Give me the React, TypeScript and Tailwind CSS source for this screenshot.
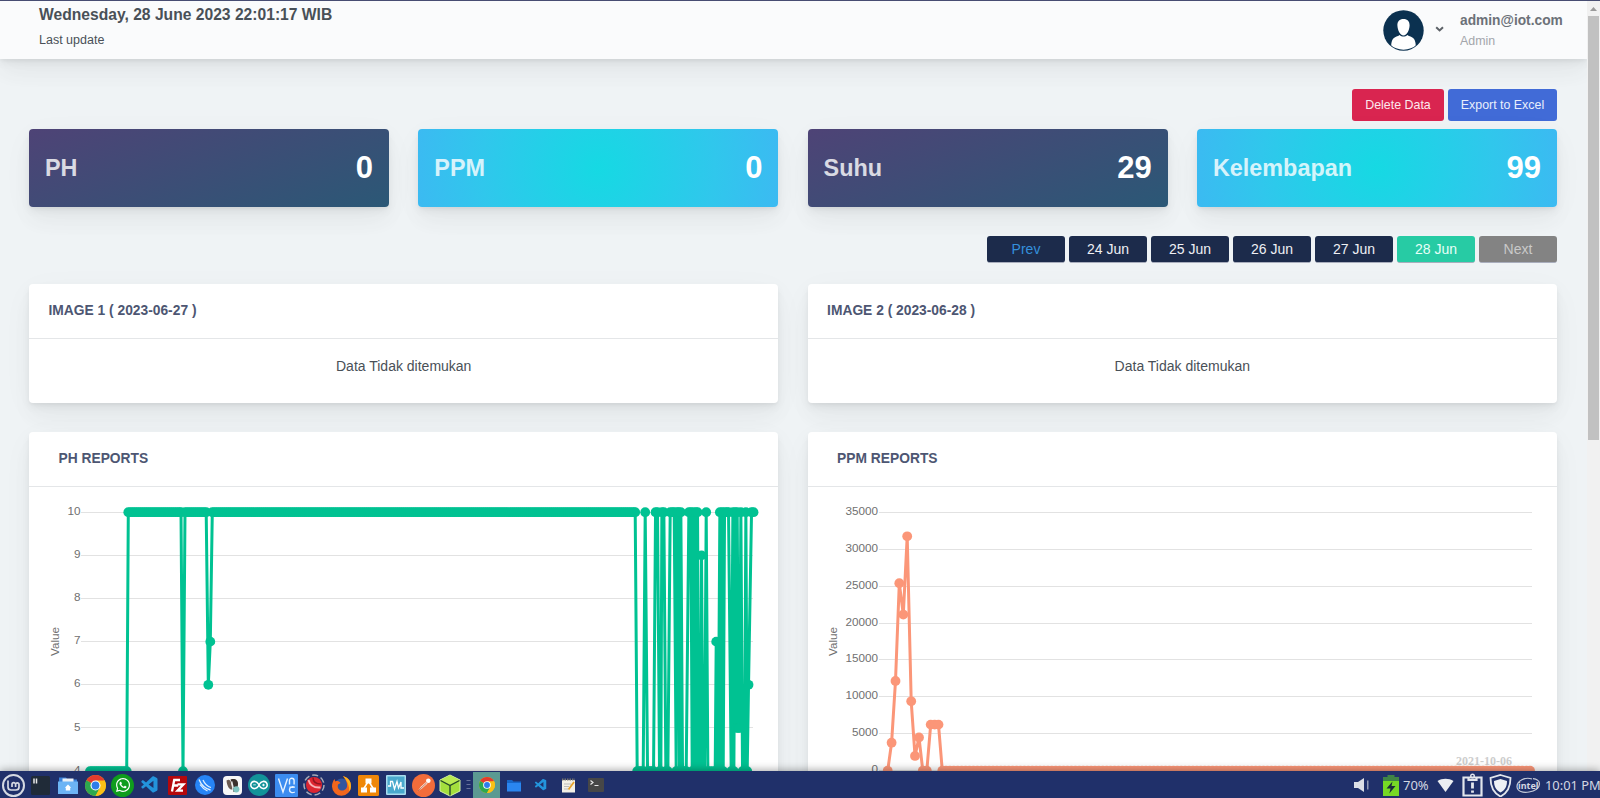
import React from "react";
import { FaWhatsapp } from "react-icons/fa";
import { SiArduino } from "react-icons/si";
import { VscVscode } from "react-icons/vsc";

const SHADOW =
  "shadow-[0_7px_34px_rgba(4,9,20,0.03),0_15px_22px_rgba(4,9,20,0.03),0_4px_8px_rgba(4,9,20,0.05),0_2px_3px_rgba(4,9,20,0.03)]";

const stats = [
  { label: "PH", value: "0", cyan: false },
  { label: "PPM", value: "0", cyan: true },
  { label: "Suhu", value: "29", cyan: false },
  { label: "Kelembapan", value: "99", cyan: true },
];

const days = [
  { label: "Prev", style: "bg-[#1c2b4b] text-[#3490dc]" },
  { label: "24 Jun", style: "bg-[#1c2b4b] text-[#eef0f4]" },
  { label: "25 Jun", style: "bg-[#1c2b4b] text-[#eef0f4]" },
  { label: "26 Jun", style: "bg-[#1c2b4b] text-[#eef0f4]" },
  { label: "27 Jun", style: "bg-[#1c2b4b] text-[#eef0f4]" },
  { label: "28 Jun", style: "bg-[#27cba4] text-[#e8fff8]" },
  { label: "Next", style: "bg-[#838383] text-[#c9c9c9]" },
];

function Header() {
  return (
    <header className={"relative z-10 flex h-[58px] shrink-0 items-start justify-between bg-[#fafbfc] pl-[39px] pr-[24px] " + SHADOW}>
      <div className="flex flex-col text-[#495057]">
        <span className="mt-[4px] text-[15.650px] font-bold leading-[20px]">Wednesday, 28 June 2023 22:01:17 WIB</span>
        <span className="mt-[7px] text-[12.500px] leading-[17px]">Last update</span>
      </div>
      <div className="flex">
        <svg className="mt-[9px] h-[41px] w-[41px]" viewBox="0 0 41 41">
          <defs>
            <clipPath id="avatar"><circle cx="20.5" cy="20.5" r="19.3" /></clipPath>
          </defs>
          <circle cx="20.5" cy="20.5" r="20.2" fill="#0b3150" />
          <g clipPath="url(#avatar)" fill="#fff">
            <path d="M20.500 9c4 0 6.300 2.500 6.100 6.600-.2 4.800-2.700 9.900-6.100 9.900s-5.900-5.100-6.100-9.900C14.200 11.500 16.500 9 20.500 9z" />
            <path d="M8.300 42c-.4-9 0-13.500 4.700-15.300 1.500-.6 2.800-1 3.600-1.700 2.400 2 5.400 2 7.800 0 .8.700 2.100 1.100 3.600 1.700 4.700 1.800 5.100 6.300 4.700 15.300z" />
          </g>
        </svg>
        <svg className="ml-[11px] mt-[24px] h-[8px] w-[9px]" viewBox="0 0 9 8" fill="none" stroke="#5c6167" strokeWidth="2">
          <path d="M1.200 2.200l3.400 3.200L8 2.200" />
        </svg>
        <div className="ml-[16px] flex w-[103px] flex-col">
          <span className="mt-[11px] text-[13.750px] font-bold leading-[18px] text-[#6c7178]">admin@iot.com</span>
          <span className="mt-[3px] text-[12.400px] leading-[16px] text-[#a3a6ab]">Admin</span>
        </div>
      </div>
    </header>
  );
}

function ImageCard({ title }: { title: string }) {
  return (
    <section className={"flex h-[119px] flex-col rounded-[4px] bg-white " + SHADOW}>
      <h2 className="flex h-[55px] items-center border-b border-[#e4e6e8] px-[19.500px] pt-[1px] text-[13.800px] font-bold text-[#4d5672]">{title}</h2>
      <p className="mt-[17px] text-center text-[14px] leading-[20px] text-[#495057]">Data Tidak ditemukan</p>
    </section>
  );
}

function ReportCard({ title, children }: { title: string; children: React.ReactNode }) {
  return (
    <section className={"flex h-[420px] flex-col rounded-[4px] bg-white " + SHADOW}>
      <h2 className="flex h-[55px] shrink-0 items-center border-b border-[#e4e6e8] px-[29.500px] pt-[1px] text-[13.800px] font-bold text-[#4d5672]">{title}</h2>
      {children}
    </section>
  );
}

type Pt = [number, number];

function Series({ points, color }: { points: Pt[]; color: string }) {
  return (
    <g fill={color}>
      <polyline points={points.map((p) => p.join(",")).join(" ")} fill="none" stroke={color} strokeWidth="3" strokeLinejoin="round" />
      {points.map((p, i) => (
        <circle key={i} cx={p[0]} cy={p[1]} r="4.9" />
      ))}
    </g>
  );
}

/* Sensor level (4..10) to vertical position inside the drawing. */
const phY = (v: number) => 25.200 + (10 - v) * 43.150;

function buildPh(): Pt[] {
  const pts: Pt[] = [];
  const put = (x: number, v: number) => pts.push([x - 29, phY(v)]);
  for (let x = 90; x < 126; x += 2.080) put(x, 4);
  put(126.700, 4);
  put(128.300, 10);
  for (let x = 130.500; x < 180; x += 2.040) put(x, 10);
  put(181, 10);
  put(183, 4);
  for (let x = 185; x < 206.600; x += 2.120) put(x, 10);
  put(208.300, 6);
  put(210.300, 7);
  put(212.300, 10);
  for (let x = 214.400; x < 634; x += 2.055) put(x, 10);
  /* Latest readings: offset from x = 600 in thirds of a pixel, then the level. */
  const tail: Pt[] = [
    [105, 10], [111, 4], [117, 4], [123, 4], [129, 4], [135, 10], [142, 4], [148, 4], [154, 4], [160, 4],
    [166, 10], [172, 10], [178, 4], [182, 4], [185, 10], [191, 10], [197, 4], [203, 4], [210, 10], [217, 10],
    [222, 10], [228, 4], [231, 10], [235, 10], [238, 4], [242, 10], [247, 4], [252, 4], [258, 4], [266, 10],
    [272, 10], [276, 4], [279, 10], [284, 4], [287, 10], [290, 4], [292, 10], [296, 4], [301, 4], [304, 9],
    [308, 4], [313, 4], [318, 10], [323, 4], [330, 4], [338, 4], [345, 4], [348, 7], [350, 4], [354, 4],
    [359, 10], [362, 4], [366, 10], [369, 4], [373, 10], [380, 10], [385, 10], [393, 4], [398, 10], [401, 4],
    [405, 10], [408, 5], [411, 10], [415, 5], [418, 5], [422, 10], [427, 4], [433, 4], [437, 10], [441, 4],
    [445, 6], [454, 10], [460, 10],
  ];
  tail.forEach(([x, v]) => put(600.200 + x / 3, v));
  return pts;
}

const phPoints = buildPh();

const ppmY = (v: number) => 25.300 + ((35000 - v) / 5000) * 36.920;

function buildPpm(): Pt[] {
  const head: Pt[] = [
    [887.700, 0], [891.600, 3800], [895.500, 12150], [899.300, 25400], [903.300, 21150], [907.200, 31750],
    [911.200, 9400], [915, 2000], [919, 4500], [922.800, 0], [926.800, 0], [930.700, 6250], [934.700, 6250],
    [938.500, 6250], [942.300, 0],
  ];
  const pts: Pt[] = head.map(([x, v]) => [x - 808, ppmY(v)]);
  for (let x = 946; x < 1534; x += 3.920) pts.push([x - 808, ppmY(0)]);
  return pts;
}

const ppmPoints = buildPpm();

function PhChart() {
  return (
    <svg className="h-[300px] w-[749px] shrink-0" viewBox="0 0 749 300" fontFamily="'Liberation Sans', Arial, sans-serif" fontSize="11.700" fill="#707070">
      {[10, 9, 8, 7, 6, 5, 4].map((v) => (
        <g key={v}>
          <path d={`M52 ${Math.floor(phY(v)) + 0.5}H724`} stroke="#e2e2e2" />
          <text x="51.500" y={Math.round(phY(v) + 2.700)} textAnchor="end">{v}</text>
        </g>
      ))}
      <text transform="translate(29.500 154.500) rotate(-90)" textAnchor="middle">Value</text>
      <Series points={phPoints} color="#00c292" />
    </svg>
  );
}

function PpmChart() {
  return (
    <svg className="h-[300px] w-[749px] shrink-0" viewBox="0 0 749 300" fontFamily="'Liberation Sans', Arial, sans-serif" fontSize="11.700" fill="#707070">
      {[35000, 30000, 25000, 20000, 15000, 10000, 5000, 0].map((v) => (
        <g key={v}>
          <path d={`M71 ${Math.floor(ppmY(v)) + 0.5}H724`} stroke="#e2e2e2" />
          <text x="70" y={Math.round(ppmY(v) + 2.500)} textAnchor="end">{v}</text>
        </g>
      ))}
      <text transform="translate(28.500 154.500) rotate(-90)" textAnchor="middle">Value</text>
      <Series points={ppmPoints} color="#fb9678" />
      <text x="676" y="278" fontFamily="'Liberation Serif', serif" fontSize="12" fontWeight="bold" textAnchor="middle" fill="#cdcdcd">2021-10-06</text>
    </svg>
  );
}

function Chrome({ size }: { size: string }) {
  return (
    <svg className={size} viewBox="0 0 20 20">
      <circle cx="10" cy="10" r="10" fill="#fbc116" />
      <path d="M10 10L1.340 5A10 10 0 0 1 18.660 5z" fill="#e33b2e" />
      <path d="M10 10L1.340 5A10 10 0 0 0 10 20l4.300-7.500z" fill="#2da94f" />
      <path d="M10 5.300h8.800A10 10 0 0 1 10 20l4-7.600z" fill="#fbc116" />
      <circle cx="10" cy="10" r="4.800" fill="#fff" />
      <circle cx="10" cy="10" r="3.700" fill="#2f7de9" />
    </svg>
  );
}

function Slot({ children, active = false }: { children: React.ReactNode; active?: boolean }) {
  return (
    <div className={"flex h-[27px] w-[27.300px] shrink-0 items-center justify-center " + (active ? "bg-[#5b9a92]" : "")}>{children}</div>
  );
}

function Launchers() {
  return (
    <div className="flex items-center pt-[1px]">
      <Slot>
        <span className="flex h-[23px] w-[23px] items-center justify-center rounded-full border-2 border-[#d5d9e2] text-[#d5d9e2]">
          <svg className="h-[15px] w-[15px] shrink-0" viewBox="0 0 15 15" fill="none" stroke="currentColor" strokeWidth="1.700">
            <path d="M2 2.500v6.500a3 3 0 0 0 3 3h5a3 3 0 0 0 3-3V6.500a1.700 1.700 0 0 0-3.400 0V9M9.600 6.500a1.800 1.800 0 0 0-3.600 0V9" />
          </svg>
        </span>
      </Slot>
      <Slot>
        <svg className="h-[19px] w-[19px]" viewBox="0 0 19 19">
          <rect width="19" height="19" rx="1.500" fill="#202b38" />
          <path d="M3 2.500v5M5.500 2.500v5" stroke="#e8e8e8" strokeWidth="1.500" />
        </svg>
      </Slot>
      <Slot>
        <svg className="h-[20px] w-[20px]" viewBox="0 0 20 20">
          <path d="M1 2.500h7l1.500 2H19V9H1z" fill="#3b82d9" />
          <path d="M4.500 3.500h11V8h-11z" fill="#e8eef5" />
          <path d="M0 6.500h20V19H0z" fill="#6cb4f5" />
          <path d="M10 9.500l3.200 3.200h-1V15.500H7.800v-2.800h-1z" fill="#fff" />
        </svg>
      </Slot>
      <Slot><Chrome size="h-[21px] w-[21px]" /></Slot>
      <Slot>
        <span className="flex h-[23px] w-[23px] items-center justify-center rounded-full bg-[#0f9d1d] text-[16px] text-white"><FaWhatsapp /></span>
      </Slot>
      <Slot><VscVscode className="h-[20px] w-[20px] text-[#2394dc]" /></Slot>
      <Slot>
        <svg className="h-[19px] w-[19px]" viewBox="0 0 19 19">
          <rect width="19" height="19" rx="1" fill="#b5080c" />
          <path d="M4 15.500L6.200 4H12M5.200 9.500h5M9.500 8.300h6l-6 6.400h5.500" fill="none" stroke="#fff" strokeWidth="2.300" />
        </svg>
      </Slot>
      <Slot>
        <svg className="h-[20px] w-[20px]" viewBox="0 0 20 20">
          <circle cx="10" cy="10" r="10" fill="#2684f6" />
          <path d="M4 4.500c2 5 6 9 11.500 10.500M8 5c1.500 3.500 4.500 6.500 8 7.500M5 9.500c2 3 4.500 5 7.500 6.500" stroke="#dff0ff" strokeWidth="1.300" fill="none" />
        </svg>
      </Slot>
      <Slot>
        <svg className="h-[19px] w-[19px]" viewBox="0 0 19 19">
          <rect width="19" height="19" rx="4" fill="#f7f7f7" />
          <path d="M3.500 4.500c2.500-1.500 3.800-.5 4.500 2l1.500 7c-3 .5-5.500-3-6-9z" fill="#6b5a50" />
          <path d="M7.500 3.500c4.500-1.500 8 .5 7.500 5-.5 4-2 7.500-4.500 7.500-.5-4-1-8-3-12.500z" fill="#3a302c" />
          <path d="M8.700 5.500l1.600 7" stroke="#eee" strokeWidth="1.300" />
          <circle cx="13.300" cy="13.300" r="3.100" fill="#7fc4c1" />
        </svg>
      </Slot>
      <Slot>
        <span className="flex h-[22px] w-[22px] items-center justify-center rounded-full bg-[#129399]"><SiArduino className="h-[18px] w-[18px] text-white" /></span>
      </Slot>
      <Slot>
        <svg className="h-[23px] w-[23px]" viewBox="0 0 23 23">
          <rect width="23" height="23" rx="1" fill="#3c8cf0" />
          <path d="M3.500 4.500L8 18l4.500-13.500M14.500 10.500V6.500a2.300 2.300 0 0 1 4.600 0v4M19.800 13.300c-2.500-1.200-5.300-.3-5.300 2.400s2.800 3.600 5.300 2.300M14.500 13.300h4" fill="none" stroke="#e7f2ff" strokeWidth="1.400" />
        </svg>
      </Slot>
      <Slot>
        <svg className="h-[22px] w-[22px]" viewBox="0 0 22 22">
          <circle cx="11" cy="11" r="10" fill="none" stroke="#a7abb8" strokeWidth="1.500" strokeDasharray="6 3" />
          <circle cx="11" cy="11" r="8" fill="#dc2531" />
          <path d="M5.500 6c1.500 5.500 5.500 8 12 7.500" stroke="#f8b1b5" strokeWidth="2" fill="none" />
          <path d="M10 3.500c0 4 3 6.500 8 6.500" stroke="#8e1620" strokeWidth="1.500" fill="none" />
        </svg>
      </Slot>
      <Slot>
        <svg className="h-[21px] w-[21px]" viewBox="0 0 21 21">
          <circle cx="10.800" cy="11" r="7.500" fill="#30569f" />
          <path d="M12 1c5 1.500 8 5 8 10a9.500 9.500 0 0 1-19 .5C1 8.500 2 6 3.500 4l.800 2.500C6 5.500 8 6 9.500 8L7 9.500C6 13 8 15.500 11 15.500c3.500 0 5.500-2.500 5-6C15.700 6 14 4 12 1z" fill="#f2661d" />
          <path d="M12 1c5 1.500 8 5 8 10 0 2-.600 4-1.800 5.600C18.500 11 16.500 6 12 1z" fill="#fbb21c" />
        </svg>
      </Slot>
      <Slot>
        <svg className="h-[21px] w-[21px]" viewBox="0 0 21 21">
          <rect width="21" height="21" rx="1.500" fill="#ef8708" />
          <path d="M10.500 6L5.500 14M10.500 6l5 8" stroke="#fff" strokeWidth="1.500" />
          <path d="M7.500 3.500h6v5h-6zM3 12.500h6v5H3zM12 12.500h6v5h-6z" fill="#fff" />
        </svg>
      </Slot>
      <Slot>
        <svg className="h-[20px] w-[20px]" viewBox="0 0 20 20">
          <rect width="20" height="20" rx="1" fill="#a9dcee" />
          <rect x="1.500" y="1.500" width="17" height="17" fill="#4aa9cd" />
          <path d="M2 11h2.500V6.500h2L8.500 14l2.500-7.500 1.500 6.500L15 7v6h3" fill="none" stroke="#fff" strokeWidth="1.300" />
        </svg>
      </Slot>
      <Slot>
        <svg className="h-[23px] w-[23px]" viewBox="0 0 23 23">
          <circle cx="11.500" cy="11.500" r="11.500" fill="#f26c3a" />
          <circle cx="16.300" cy="6.700" r="2.300" fill="#fff" />
          <path d="M14 8l1.600 1.600-5.600 5-4.500 2.900L9 12.500z" fill="#fbe3d8" />
          <path d="M6 17l8.500-8" stroke="#a84a2b" strokeWidth=".7" />
        </svg>
      </Slot>
      <Slot>
        <svg className="h-[23px] w-[22px]" viewBox="0 0 22 23">
          <path d="M11 1l10 5v11l-10 5-10-5V6z" fill="#a4df3d" stroke="#d7f5a2" />
          <path d="M11 1.500L20 6l-9 4.500L2 6z" fill="#b9ea52" />
          <path d="M1.500 6.500L11 11.500l9.500-5M11 11.500V21.500" stroke="#25462b" strokeWidth="1.400" fill="none" />
        </svg>
      </Slot>
      <svg className="h-[12px] w-[9px] shrink-0" viewBox="0 0 9 12" stroke="#68739c" strokeWidth="1">
        <path d="M2.500 1.500h4M2.500 5.500h4M2.500 9.500h4" />
      </svg>
      <Slot active><Chrome size="h-[16px] w-[16px]" /></Slot>
      <Slot>
        <svg className="h-[13px] w-[14px]" viewBox="0 0 14 13">
          <path d="M0 1h5l1.500 1.500H14V12H0z" fill="#1766c8" />
          <path d="M0 4h14v8.500H0z" fill="#2a86f0" />
        </svg>
      </Slot>
      <Slot><VscVscode className="h-[14px] w-[14px] text-[#2394dc]" /></Slot>
      <Slot>
        <svg className="h-[15px] w-[15px]" viewBox="0 0 15 15">
          <path d="M1 2h13v12.500H1z" fill="#f3f0e6" />
          <path d="M1 1.500h13" stroke="#77756f" strokeWidth="2" strokeDasharray="1.500 1" />
          <path d="M3 6h7M3 8.500h5M3 11h4" stroke="#bbb" />
          <path d="M13 4l-5.500 7.500" stroke="#e7a22b" strokeWidth="1.800" />
        </svg>
      </Slot>
      <Slot>
        <svg className="h-[14px] w-[16px]" viewBox="0 0 16 14">
          <rect width="16" height="14" rx="1" fill="#474747" />
          <path d="M2.500 2.500l2.500 2-2.500 2M6.500 7.500h4" fill="none" stroke="#e6e6e6" strokeWidth="1.200" />
        </svg>
      </Slot>
    </div>
  );
}

function Tray() {
  return (
    <div className="flex items-center pt-[1px] text-[#d3d7e2]">
      <svg className="h-[14px] w-[16px]" viewBox="0 0 16 14" fill="#dcdfe6">
        <path d="M0 4h4l6-4v14l-6-4H0z" />
        <path d="M13 2.500h1.500v9H13z" opacity=".6" />
      </svg>
      <svg className="ml-[13px] h-[21px] w-[16px]" viewBox="0 0 16 21">
        <path d="M4.500 0h7v2H16v5H0V2h4.500z" fill="#3f8445" />
        <path d="M0 6h16v15H0z" fill="#76d925" />
        <path d="M9.500 6.500L3.500 13.500h4l-1.200 5 6.200-7.500H8.500z" fill="#1b2c3c" />
      </svg>
      <span className="ml-[4px] w-[27px] font-['Noto_Sans'] text-[13px] leading-[20px]">70%</span>
      <svg className="ml-[7px] h-[14px] w-[17px]" viewBox="0 0 17 14">
        <path d="M.5 3C5 0 12 0 16.500 3L8.500 14z" fill="#eceef2" />
      </svg>
      <svg className="ml-[8px] h-[24px] w-[21px]" viewBox="0 0 21 24" fill="none" stroke="#e2e5ec" strokeWidth="2.200">
        <path d="M1.500 4.500h18V22.500h-18z" />
        <path d="M6.500 4.500V7h8V4.500" />
        <circle cx="10.500" cy="3" r="1.800" strokeWidth="1.400" />
        <path d="M10.500 9.500v6M10.500 17.500v2.300" strokeWidth="2.800" />
      </svg>
      <svg className="ml-[6px] h-[23px] w-[23px]" viewBox="0 0 23 23">
        <path d="M11.500 1l10 3c0 9-3 15-10 18.500C4.500 19 1.500 13 1.500 4z" fill="none" stroke="#e2e5ec" strokeWidth="1.800" />
        <path d="M11.500 5l6.500 2c0 5.500-2 9-6.500 11.500C7 16 5 12.500 5 7z" fill="#eef0f4" />
      </svg>
      <svg className="ml-[4px] h-[17px] w-[25px]" viewBox="0 0 25 17">
        <path d="M16 2C9-.5 1 4 1 9.500c0 5 6 6.500 12 5.500 6-.8 10.500-4 10.500-8 0-3-3-5-6.500-5.300" fill="none" stroke="#c7ccda" strokeWidth="1.200" />
        <text x="12.300" y="12" textAnchor="middle" fontFamily="'Noto Sans', sans-serif" fontSize="9" fontWeight="bold" fill="#d3d7e2">intel</text>
      </svg>
      <span className="ml-[4px] w-[55px] whitespace-nowrap font-['Noto_Sans'] text-[12.900px] leading-[20px]">10:01 PM</span>
    </div>
  );
}

export default function App() {
  return (
    <div className="flex h-[798px] w-[1600px] flex-col overflow-hidden bg-[#eff3f5] font-['Liberation_Sans',Arial,sans-serif]">
      <div className="h-px shrink-0 bg-[#474d72]" />
      <div className="flex h-[770px] shrink-0 overflow-hidden">
        <div className="flex w-[1587px] flex-col overflow-hidden">
          <Header />
          <main className="flex flex-col pl-[29px] pr-[30px] pt-[30px]">
            <div className="flex justify-end gap-[4px]">
              <button className="h-[32px] w-[92px] rounded-[3px] bg-[#d92550] text-[12.400px] text-[#fde8ee]">Delete Data</button>
              <button className="h-[32px] w-[109px] rounded-[3px] bg-[#416bd7] text-[12.400px] text-[#e9effc]">Export to Excel</button>
            </div>
            <div className="mt-[8px] grid grid-cols-4 gap-x-[29.200px]">
              {stats.map((s) => (
                <div
                  key={s.label}
                  className={
                    "flex h-[78px] items-center justify-between rounded-[4px] px-[16px] pt-[1px] font-bold text-white " + SHADOW + " " +
                    (s.cyan
                      ? "bg-[radial-gradient(circle_248px_at_center,#16d9e3_0%,#30c7ec_47%,#46aef7_100%)]"
                      : "bg-[linear-gradient(-20deg,#2b5876_0%,#4e4376_100%)]")
                  }
                >
                  <span className="text-[23.400px] opacity-80">{s.label}</span>
                  <span className="text-[31px]">{s.value}</span>
                </div>
              ))}
            </div>
            <div className="mt-[29px] flex justify-end gap-[4px]">
              {days.map((d) => (
                <button key={d.label} className={"h-[27px] w-[78px] rounded-[3px] border-b border-[#a9aebd] pt-[1px] text-[14px] " + d.style}>{d.label}</button>
              ))}
            </div>
            <div className="mt-[21px] grid grid-cols-2 gap-x-[29.200px] gap-y-[29px]">
              <ImageCard title="IMAGE 1 ( 2023-06-27 )" />
              <ImageCard title="IMAGE 2 ( 2023-06-28 )" />
              <ReportCard title="PH REPORTS"><PhChart /></ReportCard>
              <ReportCard title="PPM REPORTS"><PpmChart /></ReportCard>
            </div>
          </main>
        </div>
        <div className="flex w-[13px] flex-col items-center bg-[#f1f1f1]">
          <svg className="h-[15px] w-[11px] shrink-0" viewBox="0 0 11 15"><path d="M2 10l3.500-4L9 10z" fill="#9a9a9a" /></svg>
          <div className="h-[424px] w-[11px] bg-[#c1c1c1]" />
        </div>
      </div>
      <footer className="relative z-20 flex h-[27px] shrink-0 items-center justify-between bg-[#20306a] shadow-[0_-1px_8px_rgba(0,0,0,0.35)]">
        <Launchers />
        <Tray />
      </footer>
    </div>
  );
}
